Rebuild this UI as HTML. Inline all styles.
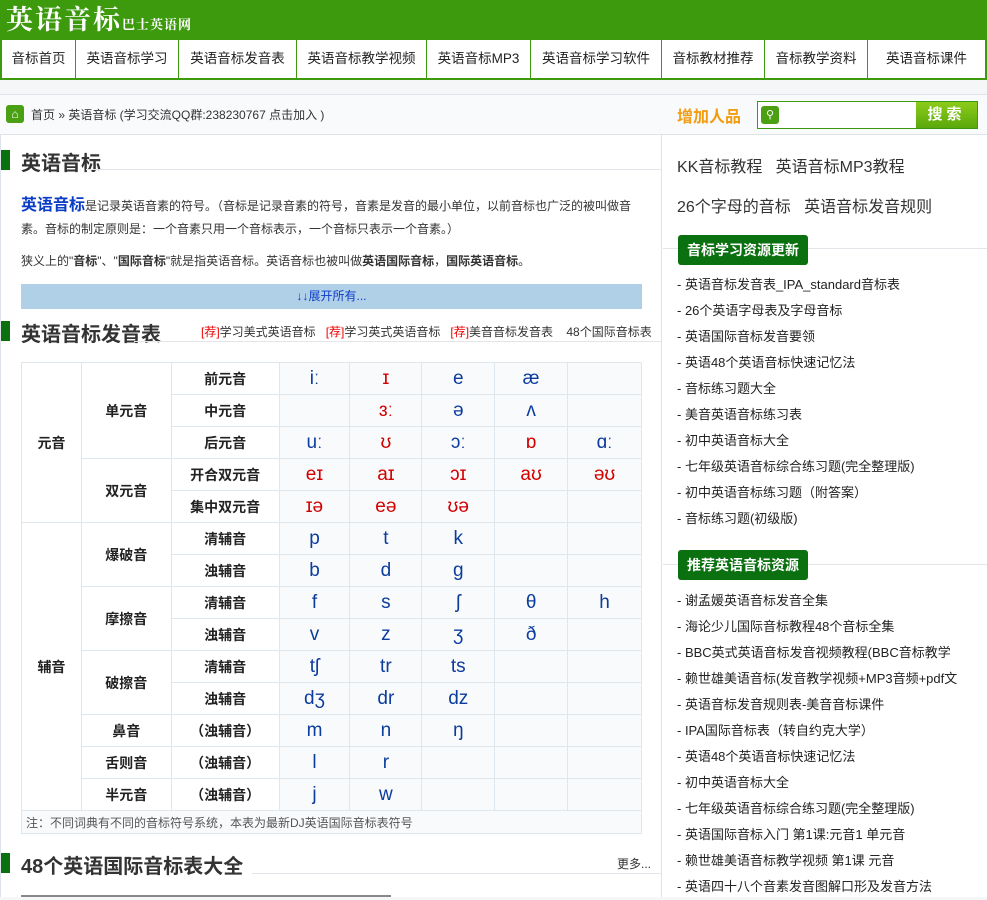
<!DOCTYPE html>
<html><head><meta charset="utf-8"><style>
*{margin:0;padding:0;box-sizing:border-box}
body{width:987px;height:897px;overflow:hidden;background:#f4f6f8;font-family:"Liberation Sans","Noto Sans CJK SC",sans-serif;color:#333;position:relative;font-size:13px}
.a{position:absolute}
#hd{left:0;top:0;width:987px;height:38px;background:#3c9a0c}
#logo{left:6px;top:3px;color:#fff;font-family:"Noto Serif CJK SC",serif;font-weight:bold;font-size:27px;letter-spacing:2px;line-height:30px}
#logo small{font-size:13px;letter-spacing:1px}
#nav{left:0;top:38px;width:987px;height:42px;background:#fff;border-top:2px solid #3c9a0c;border-bottom:2px solid #3c9a0c;display:flex}
#nav div{border-left:1px solid #3c9a0c;line-height:38px;font-size:13.5px;color:#222;white-space:nowrap;text-align:center;flex:none}
#nav div:first-child{border-left:2px solid #3c9a0c}
#crumb{left:0;top:94px;width:987px;height:41px;background:#f8fafb;border-top:1px solid #dde3e8;border-bottom:1px solid #dde3e8}
#main{left:0;top:135px;width:662px;height:762px;background:#fff;border-left:1px solid #dde3e8;border-right:1px solid #dde3e8}
#side{left:662px;top:135px;width:325px;height:762px;background:#fff}
.h2{font-size:20px;font-weight:bold;color:#333}
.bar{width:9px;height:20px;background:#0b7010}
.line{height:1px;background:#e2e6ea}
table{border-collapse:collapse;position:absolute;left:21px;top:362px;width:621px}
td{border:1px solid #dfe7ee;height:32px;text-align:center;font-size:14px;font-weight:bold;color:#222}
td.p{background:#f9fafb;font-weight:normal;font-size:19px;color:#0b3c9e}
td.r{color:#d30000}
.sl{font-size:13px;color:#222;line-height:26px}
.btn{background:#0b7010;color:#fff;font-weight:bold;font-size:14px;border-radius:3px;padding:0 9px;line-height:30px}
</style></head><body>
<div id="hd" class="a"></div>
<div id="logo" class="a">英语音标<small>巴士英语网</small></div>
<div id="nav" class="a"><div style="width:75px">音标首页</div><div style="width:103px">英语音标学习</div><div style="width:118px">英语音标发音表</div><div style="width:130px">英语音标教学视频</div><div style="width:104px">英语音标MP3</div><div style="width:131px">英语音标学习软件</div><div style="width:103px">音标教材推荐</div><div style="width:103px">音标教学资料</div><div style="border-right:2px solid #3c9a0c;width:120px">英语音标课件</div></div>
<div id="crumb" class="a"></div>
<div class="a" style="left:6px;top:105px;width:18px;height:18px;background:#4a9f12;border-radius:3px;color:#fff;font-size:12px;text-align:center;line-height:18px">⌂</div>
<div class="a" style="left:31px;top:106px;font-size:12px;color:#333">首页 » 英语音标 (学习交流QQ群:238230767 点击加入 )</div>
<div class="a" style="left:677px;top:103px;font-size:16px;font-weight:bold;color:#f39c12">增加人品</div>
<div class="a" style="left:757px;top:101px;width:221px;height:28px;border:1px solid #3c9a0c;background:#fff"></div>
<div class="a" style="left:761px;top:106px;width:18px;height:18px;background:#4a9f12;border-radius:3px;color:#fff;font-size:11px;text-align:center;line-height:18px">⚲</div>
<div class="a" style="left:916px;top:102px;width:61px;height:26px;background:linear-gradient(#8ccc1a,#5aa80c);color:#fff;font-weight:bold;font-size:15px;text-align:center;line-height:26px;letter-spacing:4px">搜索</div>
<div id="main" class="a"></div>
<div id="side" class="a"></div>
<div class="a bar" style="left:1px;top:150px"></div>
<div class="a h2" style="left:21px;top:147px">英语音标</div>
<div class="a line" style="left:86px;top:169px;width:576px"></div>
<div class="a" style="left:21px;top:194px;width:625px;font-size:12px;line-height:23px;color:#333"><b style="color:#0b3cc8;font-size:16px">英语音标</b>是记录英语音素的符号。（音标是记录音素的符号，音素是发音的最小单位，以前音标也广泛的被叫做音素。音标的制定原则是：一个音素只用一个音标表示，一个音标只表示一个音素。）</div>
<div class="a" style="left:21px;top:252px;font-size:12px;color:#333">狭义上的"<b>音标</b>"、"<b>国际音标</b>"就是指英语音标。英语音标也被叫做<b>英语国际音标</b>，<b>国际英语音标</b>。</div>
<div class="a" style="left:21px;top:284px;width:621px;height:25px;background:#b0d0e8;text-align:center;line-height:25px;font-size:12px;color:#0b3cc8">↓↓展开所有...</div>
<div class="a bar" style="left:1px;top:321px"></div>
<div class="a h2" style="left:21px;top:318px">英语音标发音表</div>
<div class="a line" style="left:134px;top:341px;width:528px"></div>
<div class="a" style="left:201px;top:323px;font-size:12px;color:#333;white-space:nowrap"><span style="color:#e00">[荐]</span>学习美式英语音标 &nbsp; <span style="color:#e00">[荐]</span>学习英式英语音标 &nbsp; <span style="color:#e00">[荐]</span>美音音标发音表 &nbsp;&nbsp; 48个国际音标表</div>
<table>
<colgroup><col style="width:60px"><col style="width:90px"><col style="width:108px"><col style="width:71px"><col style="width:72px"><col style="width:73px"><col style="width:73px"><col style="width:74px"></colgroup>
<tr><td rowspan="5">元音</td><td rowspan="3">单元音</td><td>前元音</td><td class="p">iː</td><td class="p r">ɪ</td><td class="p">e</td><td class="p">æ</td><td class="p"></td></tr>
<tr><td>中元音</td><td class="p"></td><td class="p r">ɜː</td><td class="p">ə</td><td class="p">ʌ</td><td class="p"></td></tr>
<tr><td>后元音</td><td class="p">uː</td><td class="p r">ʊ</td><td class="p">ɔː</td><td class="p r">ɒ</td><td class="p">ɑː</td></tr>
<tr><td rowspan="2">双元音</td><td>开合双元音</td><td class="p r">eɪ</td><td class="p r">aɪ</td><td class="p r">ɔɪ</td><td class="p r">aʊ</td><td class="p r">əʊ</td></tr>
<tr><td>集中双元音</td><td class="p r">ɪə</td><td class="p r">eə</td><td class="p r">ʊə</td><td class="p"></td><td class="p"></td></tr>
<tr><td rowspan="9">辅音</td><td rowspan="2">爆破音</td><td>清辅音</td><td class="p">p</td><td class="p">t</td><td class="p">k</td><td class="p"></td><td class="p"></td></tr>
<tr><td>浊辅音</td><td class="p">b</td><td class="p">d</td><td class="p">g</td><td class="p"></td><td class="p"></td></tr>
<tr><td rowspan="2">摩擦音</td><td>清辅音</td><td class="p">f</td><td class="p">s</td><td class="p">ʃ</td><td class="p">θ</td><td class="p">h</td></tr>
<tr><td>浊辅音</td><td class="p">v</td><td class="p">z</td><td class="p">ʒ</td><td class="p">ð</td><td class="p"></td></tr>
<tr><td rowspan="2">破擦音</td><td>清辅音</td><td class="p">tʃ</td><td class="p">tr</td><td class="p">ts</td><td class="p"></td><td class="p"></td></tr>
<tr><td>浊辅音</td><td class="p">dʒ</td><td class="p">dr</td><td class="p">dz</td><td class="p"></td><td class="p"></td></tr>
<tr><td>鼻音</td><td>（浊辅音）</td><td class="p">m</td><td class="p">n</td><td class="p">ŋ</td><td class="p"></td><td class="p"></td></tr>
<tr><td>舌则音</td><td>（浊辅音）</td><td class="p">l</td><td class="p">r</td><td class="p"></td><td class="p"></td><td class="p"></td></tr>
<tr><td>半元音</td><td>（浊辅音）</td><td class="p">j</td><td class="p">w</td><td class="p"></td><td class="p"></td><td class="p"></td></tr>
<tr><td colspan="8" style="background:#f9fafb;text-align:left;font-weight:normal;font-size:12px;color:#555;height:23px;padding-left:4px">注：不同词典有不同的音标符号系统，本表为最新DJ英语国际音标表符号</td></tr>
</table>
<div class="a bar" style="left:1px;top:853px"></div>
<div class="a h2" style="left:21px;top:850px">48个英语国际音标表大全</div>
<div class="a line" style="left:252px;top:873px;width:410px"></div>
<div class="a" style="left:617px;top:855px;font-size:12px;color:#333">更多...</div>
<div class="a" style="left:21px;top:895px;width:370px;height:2px;background:#888"></div>
<div class="a" style="left:677px;top:153px;font-size:16px;color:#333;word-spacing:0">KK音标教程 &nbsp; 英语音标MP3教程</div>
<div class="a" style="left:677px;top:193px;font-size:16px;color:#333">26个字母的音标 &nbsp; 英语音标发音规则</div>
<div class="a line" style="left:663px;top:248px;width:324px"></div>
<div class="a btn" style="left:678px;top:235px">音标学习资源更新</div>
<div class="a sl" style="left:677px;top:272px">- 英语音标发音表_IPA_standard音标表<br>- 26个英语字母表及字母音标<br>- 英语国际音标发音要领<br>- 英语48个英语音标快速记忆法<br>- 音标练习题大全<br>- 美音英语音标练习表<br>- 初中英语音标大全<br>- 七年级英语音标综合练习题(完全整理版)<br>- 初中英语音标练习题（附答案）<br>- 音标练习题(初级版)</div>
<div class="a line" style="left:663px;top:564px;width:324px"></div>
<div class="a btn" style="left:678px;top:550px">推荐英语音标资源</div>
<div class="a sl" style="left:677px;top:588px;white-space:nowrap">- 谢孟媛英语音标发音全集<br>- 海论少儿国际音标教程48个音标全集<br>- BBC英式英语音标发音视频教程(BBC音标教学<br>- 赖世雄美语音标(发音教学视频+MP3音频+pdf文<br>- 英语音标发音规则表-美音音标课件<br>- IPA国际音标表（转自约克大学）<br>- 英语48个英语音标快速记忆法<br>- 初中英语音标大全<br>- 七年级英语音标综合练习题(完全整理版)<br>- 英语国际音标入门 第1课:元音1 单元音<br>- 赖世雄美语音标教学视频 第1课 元音<br>- 英语四十八个音素发音图解口形及发音方法</div>
</body></html>
